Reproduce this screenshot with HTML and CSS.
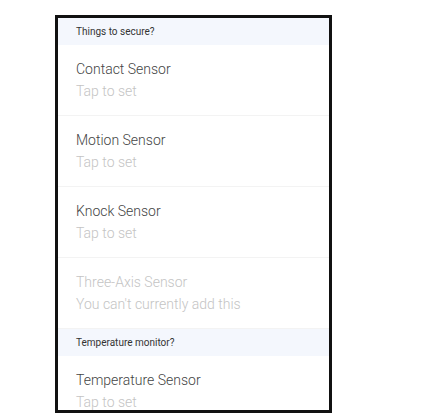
FILE: index.html
```html
<!DOCTYPE html>
<html>
<head>
<meta charset="utf-8">
<link rel="stylesheet" href="styles.css">
</head>
<body>
<div class="frame">
  <div class="section-header">Things to secure?</div>
  <div class="item">
    <div class="title">Contact Sensor</div>
    <div class="subtitle">Tap to set</div>
  </div>
  <div class="item">
    <div class="title">Motion Sensor</div>
    <div class="subtitle">Tap to set</div>
  </div>
  <div class="item">
    <div class="title">Knock Sensor</div>
    <div class="subtitle">Tap to set</div>
  </div>
  <div class="item item-disabled">
    <div class="title">Three-Axis Sensor</div>
    <div class="subtitle">You can't currently add this</div>
  </div>
  <div class="section-header">Temperature monitor?</div>
  <div class="item">
    <div class="title">Temperature Sensor</div>
    <div class="subtitle">Tap to set</div>
  </div>
</div>
</body>
</html>
```

FILE: styles.css
```css
html, body {
  margin: 0;
  padding: 0;
  background: #ffffff;
}

body {
  font-family: Roboto, "Liberation Sans", sans-serif;
}

.frame {
  box-sizing: border-box;
  width: 277px;
  height: 398px;
  margin: 15px 0 0 55px;
  border: 3px solid #111111;
  overflow: hidden;
  background: #ffffff;
}

.section-header {
  height: 27px;
  line-height: 27px;
  padding-left: 18px;
  background: #f4f7fd;
  color: #333333;
  font-size: 10px;
}

.item {
  box-sizing: border-box;
  height: 71px;
  padding: 14px 18px 0;
  border-bottom: 1px solid #f3f3f3;
}

.title {
  font-size: 14px;
  font-weight: 300;
  line-height: 20px;
  color: #444444;
}

.subtitle {
  margin-top: 2px;
  font-size: 14px;
  font-weight: 300;
  line-height: 20px;
  color: #c4c4c4;
}

.item-disabled .title {
  color: #c4c4c4;
}
```
